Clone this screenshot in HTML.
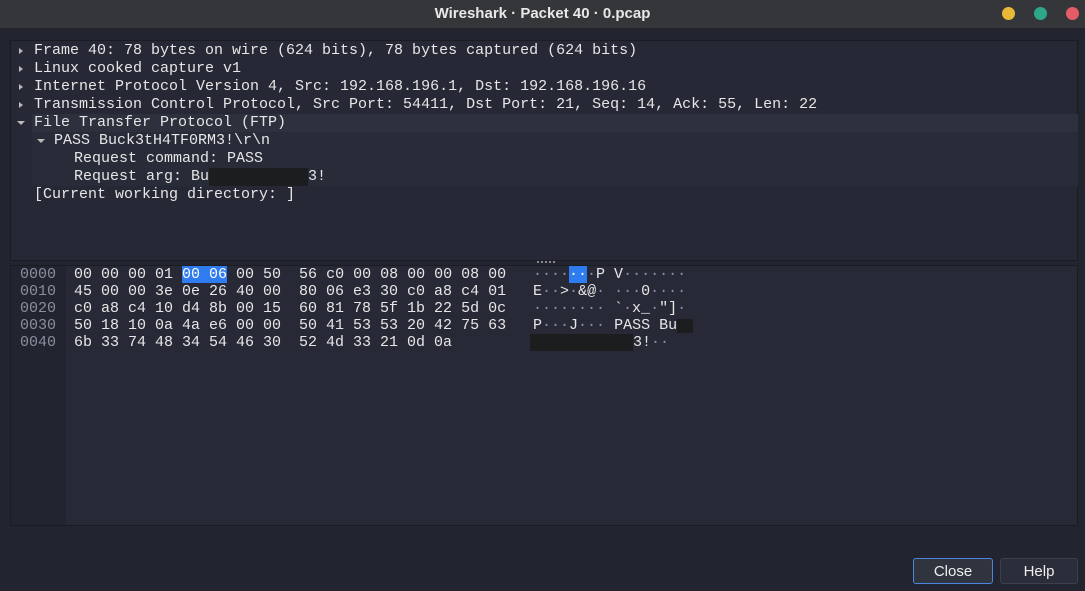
<!DOCTYPE html>
<html><head><style>
*{margin:0;padding:0;box-sizing:border-box}
body{width:1085px;height:591px;background:#22252f;overflow:hidden;position:relative;font-family:"Liberation Sans",sans-serif}
.title{position:absolute;left:0;top:0;width:1085px;height:28px;background:#35363a;color:#e8e8e8;font-weight:bold;font-size:15px;text-align:center;line-height:27px}
.dot{position:absolute;top:7px;width:13px;height:13px;border-radius:50%}
.mono{font-family:"Liberation Mono",monospace;font-size:15px;color:#e6e6e6;white-space:pre}
.p1{position:absolute;left:10px;top:40px;width:1068px;height:221px;background:#262935;border:1px solid #1a1c24}
.p2{position:absolute;left:10px;top:265px;width:1068px;height:261px;background:#272a36;border:1px solid #1a1c24}
.off{position:absolute;left:0;top:0;width:55px;height:100%;background:#22252f}
.row{position:absolute;height:18px;line-height:18px}
.tri{position:absolute;width:0;height:0}
.tr{border-top:3px solid transparent;border-bottom:3px solid transparent;border-left:4px solid #bbb}
.td{border-left:4px solid transparent;border-right:4px solid transparent;border-top:4px solid #bbb}
.hl{background:#2d303d}
.blk{display:inline-block;background:#1b1d1f;vertical-align:top}
.sel{background:#2f7bf0;color:#fff}
.g{color:#8a8fa0}
.btn{position:absolute;top:558px;height:26px;border-radius:3px;background:#2b2e3a;border:1px solid #3c404c;color:#eee;font-size:15px;text-align:center;line-height:25px}
</style></head><body>
<div class="title">Wireshark · Packet 40 · 0.pcap</div>
<div class="dot" style="left:1002px;background:#e8b937"></div>
<div class="dot" style="left:1034px;background:#2ea68a"></div>
<div class="dot" style="left:1066px;background:#e35c66"></div>

<div class="p1">
 <div class="row hl" style="left:21px;top:73px;width:1046px;height:72px;background:#282b38"></div>
 <div class="row hl" style="left:21px;top:73px;width:1046px"></div>
 <div class="tri tr" style="left:8px;top:7px"></div>
 <div class="tri tr" style="left:8px;top:25px"></div>
 <div class="tri tr" style="left:8px;top:43px"></div>
 <div class="tri tr" style="left:8px;top:61px"></div>
 <div class="tri td" style="left:6px;top:80px"></div>
 <div class="tri td" style="left:26px;top:98px"></div>
 <div class="row mono" style="left:23px;top:1px">Frame 40: 78 bytes on wire (624 bits), 78 bytes captured (624 bits)</div>
 <div class="row mono" style="left:23px;top:19px">Linux cooked capture v1</div>
 <div class="row mono" style="left:23px;top:37px">Internet Protocol Version 4, Src: 192.168.196.1, Dst: 192.168.196.16</div>
 <div class="row mono" style="left:23px;top:55px">Transmission Control Protocol, Src Port: 54411, Dst Port: 21, Seq: 14, Ack: 55, Len: 22</div>
 <div class="row mono" style="left:23px;top:73px">File Transfer Protocol (FTP)</div>
 <div class="row mono" style="left:43px;top:91px">PASS Buck3tH4TF0RM3!\r\n</div>
 <div class="row mono" style="left:63px;top:109px">Request command: PASS</div>
 <div class="row mono" style="left:63px;top:127px">Request arg: Bu<span class="blk" style="width:99px;height:18px"></span>3!</div>
 <div class="row mono" style="left:23px;top:145px">[Current working directory: ]</div>
</div>
<div style="position:absolute;left:537px;top:261px;width:18px;border-top:2px dotted #888"></div>
<div class="p2">
 <div class="off"></div>
 <div class="row mono g" style="left:9px;top:0">0000</div>
 <div class="row mono g" style="left:9px;top:17px">0010</div>
 <div class="row mono g" style="left:9px;top:34px">0020</div>
 <div class="row mono g" style="left:9px;top:51px">0030</div>
 <div class="row mono g" style="left:9px;top:68px">0040</div>
 <div class="row mono" style="left:63px;top:0">00 00 00 01 <span class="sel">00 06</span> 00 50  56 c0 00 08 00 00 08 00</div>
 <div class="row mono" style="left:63px;top:17px">45 00 00 3e 0e 26 40 00  80 06 e3 30 c0 a8 c4 01</div>
 <div class="row mono" style="left:63px;top:34px">c0 a8 c4 10 d4 8b 00 15  60 81 78 5f 1b 22 5d 0c</div>
 <div class="row mono" style="left:63px;top:51px">50 18 10 0a 4a e6 00 00  50 41 53 53 20 42 75 63</div>
 <div class="row mono" style="left:63px;top:68px">6b 33 74 48 34 54 46 30  52 4d 33 21 0d 0a</div>
 <div class="row mono" style="left:522px;top:0"><span class="g">····</span><span class="sel">··</span><span class="g">·</span>P V<span class="g">·······</span></div>
 <div class="row mono" style="left:522px;top:17px">E<span class="g">··</span>&gt;<span class="g">·</span>&amp;@<span class="g">·</span> <span class="g">···</span>0<span class="g">····</span></div>
 <div class="row mono" style="left:522px;top:34px"><span class="g">········</span> `<span class="g">·</span>x_<span class="g">·</span>"]<span class="g">·</span></div>
 <div class="row mono" style="left:522px;top:51px">P<span class="g">···</span>J<span class="g">···</span> PASS Bu<span class="blk" style="width:16px;height:14px;margin-top:2px"></span></div>
 <div class="row mono" style="left:519px;top:68px"><span class="blk" style="width:103px;height:17px"></span>3!<span class="g">··</span></div>
</div>
<div class="btn" style="left:913px;width:80px;border-color:#4a86e0;background:#30343f">Close</div>
<div class="btn" style="left:1000px;width:78px">Help</div>
</body></html>
